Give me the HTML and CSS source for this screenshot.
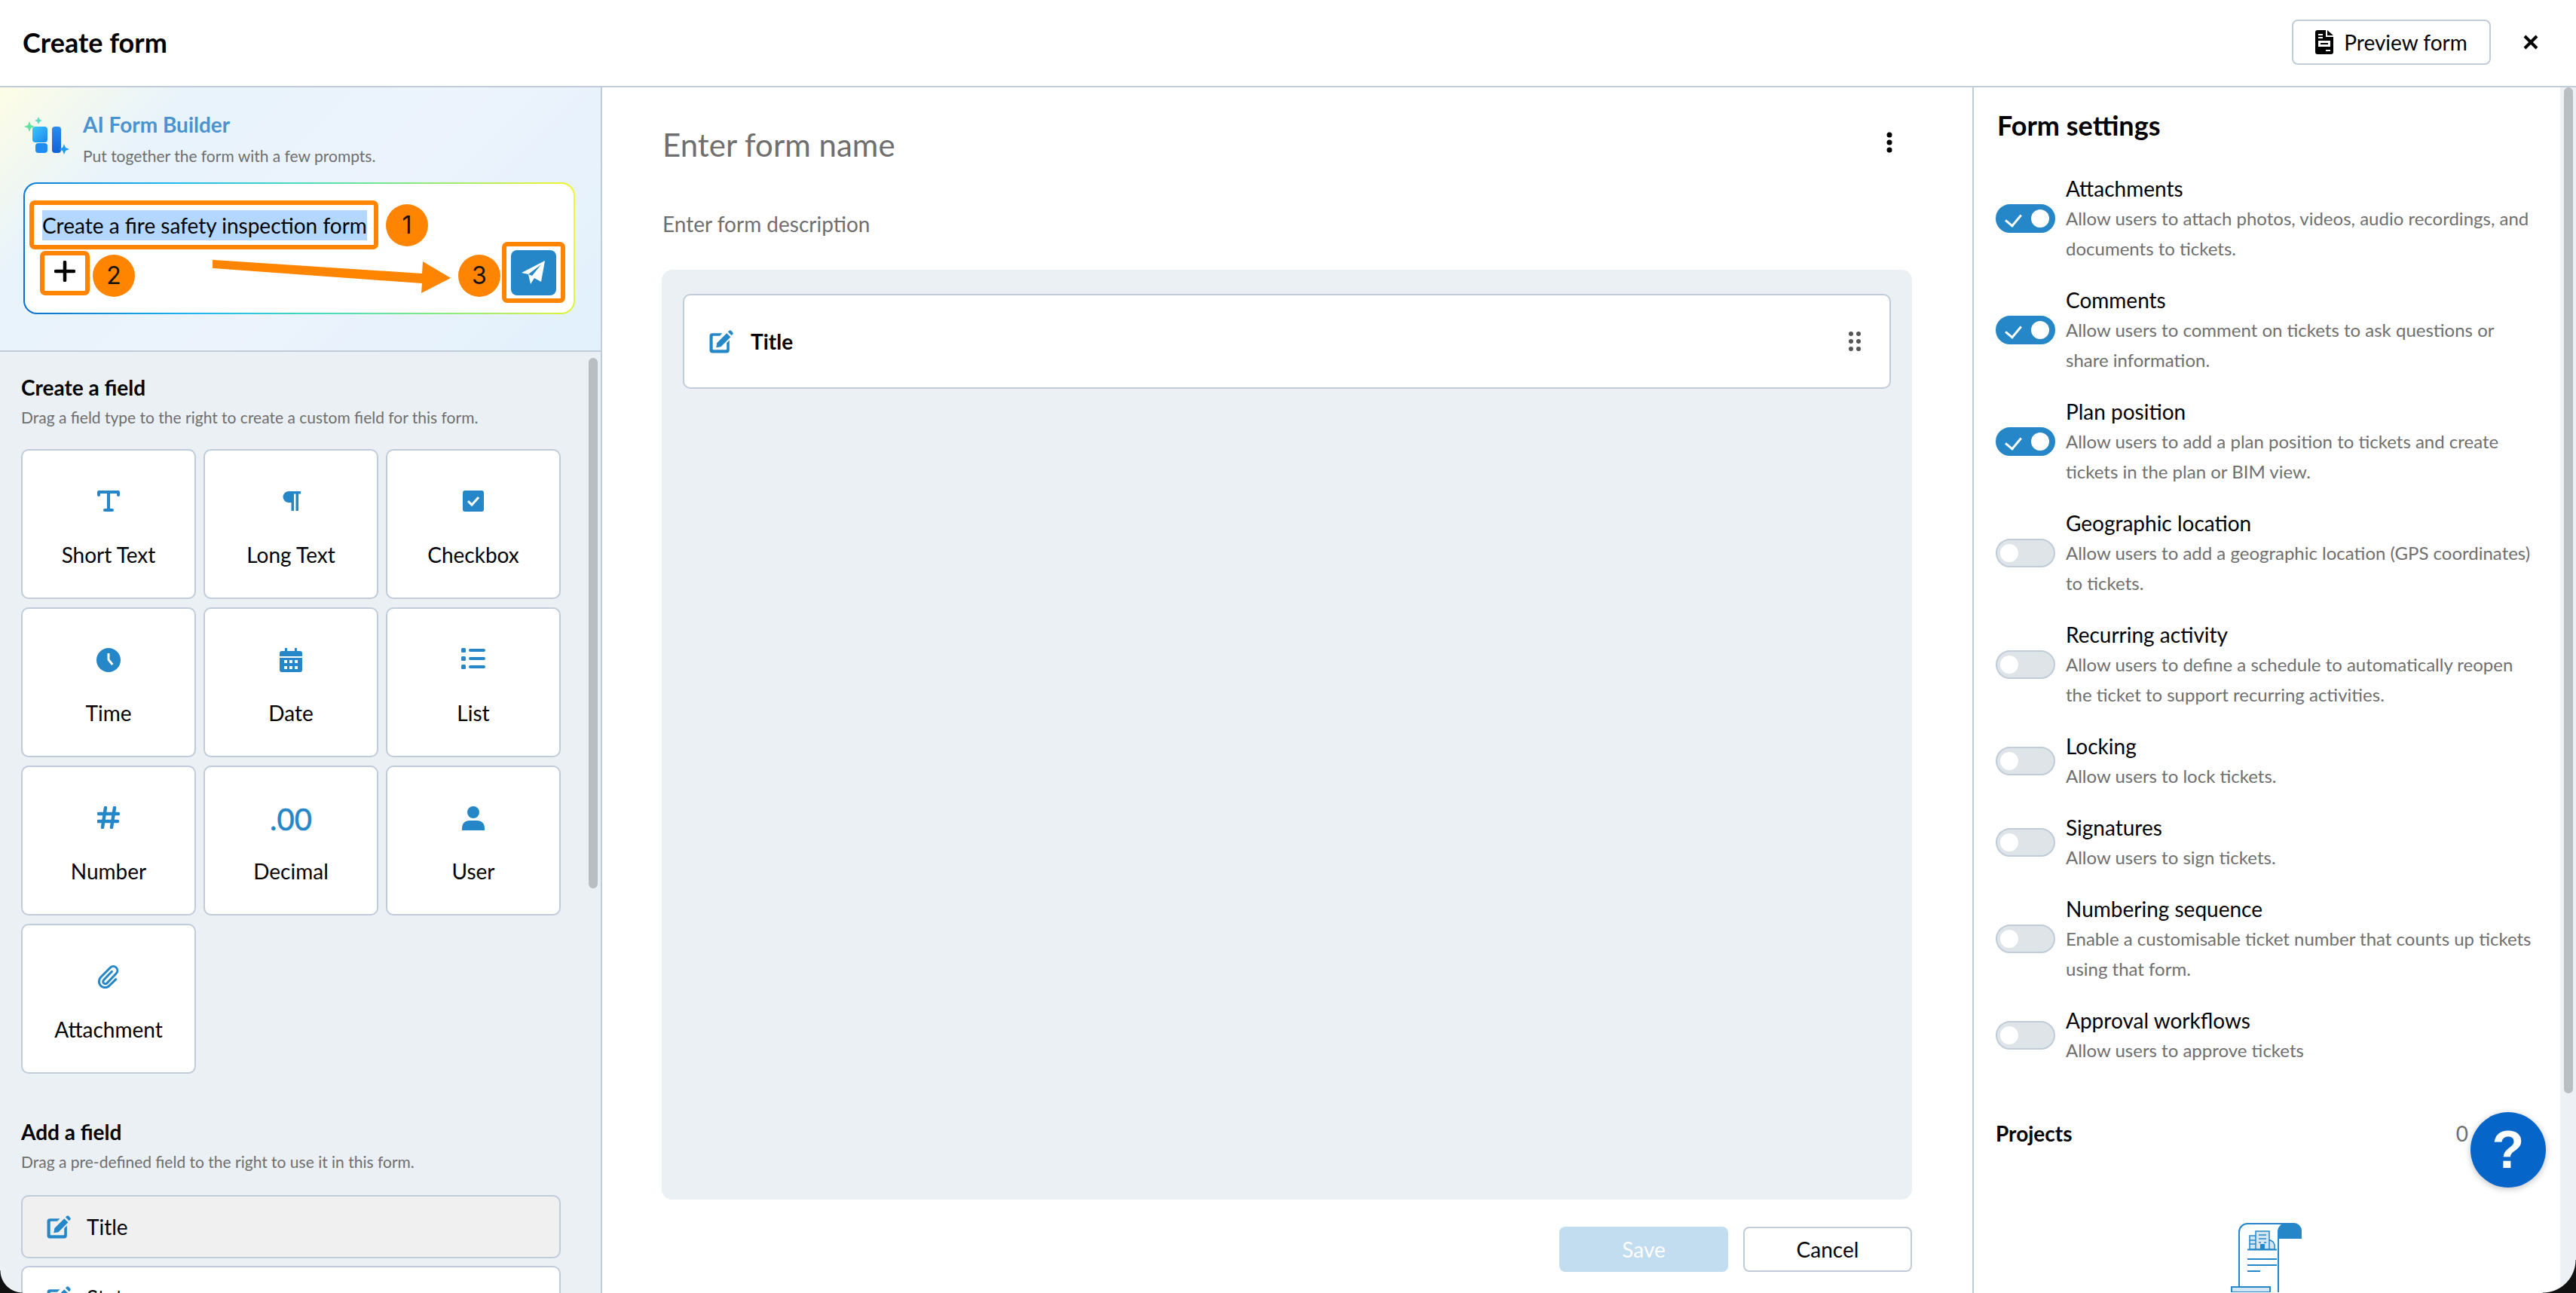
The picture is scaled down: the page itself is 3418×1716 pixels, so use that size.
FILE: index.html
```html
<!DOCTYPE html>
<html lang="en">
<head>
  <meta charset="UTF-8">
  <title>Create form</title>
  <link rel="stylesheet" href="styles.css">
</head>
<body>
  <svg class="sprites" width="0" height="0">
    <symbol id="i-edit" viewBox="0 0 32 32"><path d="M5 5h13l-3.500 3.500H6.500a1 1 0 0 0-1 1v16a1 1 0 0 0 1 1h16a1 1 0 0 0 1-1v-8l3.500-3.500V27a3.500 3.500 0 0 1-3.500 3.500H5A3.500 3.500 0 0 1 1.500 27V8.500A3.500 3.500 0 0 1 5 5z"/><path d="M11 17.500 23.500 5l5 5L16 22.500l-6 1zM25.200 3.300l1.300-1.300a2 2 0 0 1 2.800 0l1.800 1.800a2 2 0 0 1 0 2.800l-1.300 1.300z"/></symbol>
  </svg>

  <header class="topbar">
    <h1>Create form</h1>
    <div class="topbar-actions">
      <button class="btn preview-btn" type="button">
        <svg width="24" height="32" viewBox="0 0 24 32"><path d="M3 0h11v9h10v20a3 3 0 0 1-3 3H3a3 3 0 0 1-3-3V3a3 3 0 0 1 3-3zM16 0l8 7h-8z"/><path d="M4 14h16v8H4z" fill="#fff"/><path d="M7 17h10v2H7z"/><path d="M4 5h6v2H4zM4 9h6v2H4zM14 26h6v2h-6z" fill="#fff"/></svg>
        Preview form
      </button>
      <svg class="close-icon" width="20" height="20" viewBox="0 0 20 20"><path d="M2 2l16 16M18 2 2 18" stroke="#000" stroke-width="4" fill="none"/></svg>
    </div>
  </header>

  <main class="layout">
    <aside class="left-panel">
      <section class="ai-box">
        <div class="ai-head">
          <svg class="ai-logo" width="60" height="50" viewBox="0 0 60 50">
            <defs>
              <linearGradient id="aiA" x1="0" y1="0" x2="1" y2="1"><stop offset="0" stop-color="#3cc8fb"/><stop offset="1" stop-color="#1a86ee"/></linearGradient>
              <linearGradient id="aiB" x1="0" y1="0" x2="0" y2="1"><stop offset="0" stop-color="#2a8cf0"/><stop offset="1" stop-color="#0f62d6"/></linearGradient>
            </defs>
            <path d="M7 6l2 5 5 2-5 2-2 5-2-5-5-2 5-2z" fill="#5ee6a0"/>
            <path d="M19 0l1.500 3.500L24 5l-3.500 1.500L19 10l-1.500-3.500L14 5l3.500-1.500z" fill="#5fdcc0"/>
            <rect x="11" y="13" width="20" height="21" rx="4" fill="url(#aiA)"/>
            <rect x="15" y="37" width="16" height="13" rx="4" fill="#1f8cf3" transform="translate(0 -2)"/>
            <rect x="37" y="13" width="12" height="35" rx="4" fill="url(#aiB)"/>
            <path d="M53 36l2 5 5 2-5 2-2 5-2-5-5-2 5-2z" fill="#1f9bf5"/>
          </svg>
          <div class="ai-text">
            <div class="ai-title">AI Form Builder</div>
            <div class="ai-sub">Put together the form with a few prompts.</div>
          </div>
        </div>
        <div class="prompt-box">
          <div class="prompt-top">
            <div class="mark prompt-mark"><span class="selected-text">Create a fire safety inspection form</span></div>
            <span class="step step-one">1</span>
          </div>
          <div class="prompt-bottom">
            <div class="mark plus-mark">
              <svg width="28" height="28" viewBox="0 0 28 28"><path d="M14 2v24M2 14h24" stroke="#000" stroke-width="4.500" stroke-linecap="round"/></svg>
            </div>
            <span class="step">2</span>
            <span class="step step-three">3</span>
            <div class="mark send-mark">
              <div class="send-btn">
                <svg width="34" height="34" viewBox="0 0 34 34"><path d="M32 1 27 29l-9-5-5 8-3-13L1 17z" fill="#fff"/><path d="M27 6 10 19l5 2z" fill="#2587c7"/></svg>
              </div>
            </div>
          </div>
          <svg class="arrow" width="320" height="48" viewBox="0 0 320 48"><path d="M2 2 278 20 279 4 316 26 277 46 278 33 1 13a5 5 0 0 1 1-11z" fill="#ff8500"/></svg>
        </div>
      </section>

      <section class="field-scroll">
        <div class="scroll-content">
          <h2>Create a field</h2>
          <p class="hint">Drag a field type to the right to create a custom field for this form.</p>
          <div class="type-grid">
            <div class="type-card">
              <svg class="type-icon" width="30" height="30" viewBox="0 0 30 30"><path d="M2 7V3h26v4M15 3v24M10 27h10" fill="none" stroke="#2587c7" stroke-width="4" stroke-linecap="round" stroke-linejoin="round"/></svg>
              <span>Short Text</span>
            </div>
            <div class="type-card">
              <svg class="type-icon" width="30" height="30" viewBox="0 0 30 30"><path d="M12 2h16v3.500h-3V28h-3.500V5.500H19V28h-3.500V17H12A7.500 7.500 0 0 1 12 2z"/></svg>
              <span>Long Text</span>
            </div>
            <div class="type-card">
              <svg class="type-icon" width="30" height="30" viewBox="0 0 30 30"><rect x="1" y="1" width="28" height="28" rx="3"/><path d="M8 15l5 5 9-10" fill="none" stroke="#fff" stroke-width="3"/></svg>
              <span>Checkbox</span>
            </div>
            <div class="type-card">
              <svg class="type-icon" width="32" height="32" viewBox="0 0 32 32"><circle cx="16" cy="16" r="16"/><path d="M14.500 7h3v8l5 6-2.300 2-5.700-7z" fill="#fff"/></svg>
              <span>Time</span>
            </div>
            <div class="type-card">
              <svg class="type-icon" width="30" height="32" viewBox="0 0 30 32"><path d="M7 0h3v4h10V0h3v4h4a3 3 0 0 1 3 3v4H0V7a3 3 0 0 1 3-3h4zM0 13h30v16a3 3 0 0 1-3 3H3a3 3 0 0 1-3-3z"/><path d="M6 16h4v4H6zM13 16h4v4h-4zM20 16h4v4h-4zM6 24h4v4H6zM13 24h4v4h-4zM20 24h4v4h-4z" fill="#fff"/></svg>
              <span>Date</span>
            </div>
            <div class="type-card">
              <svg class="type-icon" width="32" height="28" viewBox="0 0 32 28"><rect x="0" y="0" width="6" height="6" rx="1.500"/><rect x="0" y="11" width="6" height="6" rx="1.500"/><rect x="0" y="22" width="6" height="6" rx="1.500"/><rect x="10" y="1" width="22" height="4" rx="2"/><rect x="10" y="12" width="22" height="4" rx="2"/><rect x="10" y="23" width="22" height="4" rx="2"/></svg>
              <span>List</span>
            </div>
            <div class="type-card">
              <svg class="type-icon" width="30" height="30" viewBox="0 0 30 30"><path d="M11 2 7 28M23 2l-4 26M2 10h26M1 20h26" fill="none" stroke="#2587c7" stroke-width="4.500" stroke-linecap="round"/></svg>
              <span>Number</span>
            </div>
            <div class="type-card">
              <div class="decimal-icon">.00</div>
              <span>Decimal</span>
            </div>
            <div class="type-card">
              <svg class="type-icon" width="30" height="32" viewBox="0 0 30 32"><circle cx="15" cy="8" r="8"/><path d="M0 32v-3c0-6 4-10 10-10h10c6 0 10 4 10 10v3z"/></svg>
              <span>User</span>
            </div>
            <div class="type-card">
              <svg class="type-icon" width="30" height="32" viewBox="0 0 30 32"><path d="M19 9 9 21a3 3 0 0 0 4.500 4L25 11a5.500 5.500 0 0 0-8-7.500L4.500 18A8 8 0 0 0 16 29l9-10" fill="none" stroke="#2587c7" stroke-width="3" stroke-linecap="round" transform="rotate(4 15 16)"/></svg>
              <span>Attachment</span>
            </div>
          </div>

          <h2 class="add-heading">Add a field</h2>
          <p class="hint">Drag a pre-defined field to the right to use it in this form.</p>
          <div class="field-row used">
            <svg class="row-icon" width="33" height="33"><use href="#i-edit"/></svg>
            <span>Title</span>
          </div>
          <div class="field-row">
            <svg class="row-icon" width="33" height="33"><use href="#i-edit"/></svg>
            <span>Status</span>
          </div>
        </div>
        <div class="scrollbar left-thumb"></div>
      </section>
    </aside>

    <section class="center-panel">
      <div class="name-row">
        <div class="form-name">Enter form name</div>
        <svg class="more-icon" width="8" height="28" viewBox="0 0 8 28"><circle cx="4" cy="4" r="3.500"/><circle cx="4" cy="14" r="3.500"/><circle cx="4" cy="24" r="3.500"/></svg>
      </div>
      <div class="form-desc">Enter form description</div>
      <div class="drop-area">
        <div class="title-card">
          <svg class="row-icon" width="33" height="33"><use href="#i-edit"/></svg>
          <span>Title</span>
          <svg class="drag-icon" width="16" height="26" viewBox="0 0 16 26"><circle cx="3" cy="3" r="3"/><circle cx="13" cy="3" r="3"/><circle cx="3" cy="13" r="3"/><circle cx="13" cy="13" r="3"/><circle cx="3" cy="23" r="3"/><circle cx="13" cy="23" r="3"/></svg>
        </div>
      </div>
      <div class="form-actions">
        <button class="btn save-btn" type="button">Save</button>
        <button class="btn cancel-btn" type="button">Cancel</button>
      </div>
    </section>

    <aside class="right-panel">
      <div class="settings">
        <h2 class="settings-title">Form settings</h2>

        <div class="setting">
          <span class="toggle on"></span>
          <div><div class="setting-name">Attachments</div><div class="setting-desc">Allow users to attach photos, videos, audio recordings, and documents to tickets.</div></div>
        </div>
        <div class="setting">
          <span class="toggle on"></span>
          <div><div class="setting-name">Comments</div><div class="setting-desc">Allow users to comment on tickets to ask questions or share information.</div></div>
        </div>
        <div class="setting">
          <span class="toggle on"></span>
          <div><div class="setting-name">Plan position</div><div class="setting-desc">Allow users to add a plan position to tickets and create tickets in the plan or BIM view.</div></div>
        </div>
        <div class="setting">
          <span class="toggle"></span>
          <div><div class="setting-name">Geographic location</div><div class="setting-desc">Allow users to add a geographic location (GPS coordinates) to tickets.</div></div>
        </div>
        <div class="setting">
          <span class="toggle"></span>
          <div><div class="setting-name">Recurring activity</div><div class="setting-desc">Allow users to define a schedule to automatically reopen the ticket to support recurring activities.</div></div>
        </div>
        <div class="setting">
          <span class="toggle"></span>
          <div><div class="setting-name">Locking</div><div class="setting-desc">Allow users to lock tickets.</div></div>
        </div>
        <div class="setting">
          <span class="toggle"></span>
          <div><div class="setting-name">Signatures</div><div class="setting-desc">Allow users to sign tickets.</div></div>
        </div>
        <div class="setting">
          <span class="toggle"></span>
          <div><div class="setting-name">Numbering sequence</div><div class="setting-desc">Enable a customisable ticket number that counts up tickets using that form.</div></div>
        </div>
        <div class="setting">
          <span class="toggle"></span>
          <div><div class="setting-name">Approval workflows</div><div class="setting-desc">Allow users to approve tickets</div></div>
        </div>

        <div class="projects-row">
          <span class="projects-label">Projects</span>
          <span class="projects-count">0</span>
        </div>
        <svg class="projects-art" width="95" height="92" viewBox="0 0 95 92">
          <path d="M11 92V12A11 11 0 0 1 22 1h52a11 11 0 0 0-11 11v80" fill="#fff" stroke="#2587c7" stroke-width="2"/>
          <path d="M63 21V11A10.500 10.500 0 0 1 73.500 0h10A10.500 10.500 0 0 1 94 11v10z" fill="#2587c7"/>
          <path d="M1 85h51v7H1z" fill="#d4e6f3" stroke="#2587c7" stroke-width="2"/>
          <path d="M25 35V17h8v18zM33 35V11h18v24zM51 35V22l5 3 2 4v6z" fill="#d4e6f3" stroke="#2587c7" stroke-width="1.500"/>
          <path d="M37 16h10M37 21h10M37 26h3M44 26h3M25 23h8M25 28h8" stroke="#2587c7" stroke-width="1.500"/>
          <path d="M39 35v-7h6v7z" fill="#2587c7"/>
          <path d="M22 35.500h39M22 48h39M22 56h39M22 64h17" stroke="#2587c7" stroke-width="2"/>
        </svg>
      </div>
      <div class="settings-track"><div class="scrollbar right-thumb"></div></div>
    </aside>
  </main>

  <button class="help-btn" type="button">?</button>
  <div class="corner corner-left"></div>
  <div class="corner corner-right"></div>
</body>
</html>
```

FILE: styles.css
```css
* {
  box-sizing: border-box;
}
html, body {
  margin: 0;
  height: 100%;
  overflow: hidden;
}
body {
  font-family: "Lato", sans-serif;
  color: #000;
  background: #fff;
  position: relative;
}
h1, h2, p {
  margin: 0;
}
.sprites {
  position: absolute;
}
.btn {
  font-family: inherit;
  font-size: 28px;
  border-radius: 8px;
  height: 60px;
  cursor: pointer;
}

/* top bar */
.topbar {
  height: 116px;
  border-bottom: 2px solid #c0ccd9;
  display: flex;
  align-items: center;
  justify-content: space-between;
  padding: 0 50px 2px 30px;
}
.topbar h1 {
  font-size: 36px;
  font-weight: 700;
}
.topbar-actions {
  display: flex;
  align-items: center;
  gap: 43px;
}
.preview-btn {
  width: 264px;
  background: #fff;
  border: 2px solid #c0ccd9;
  display: flex;
  align-items: center;
  justify-content: center;
  gap: 14px;
}

.layout {
  display: flex;
  height: 1600px;
}

/* left column */
.left-panel {
  width: 799px;
  flex: none;
  border-right: 2px solid #c0ccd9;
  display: flex;
  flex-direction: column;
}
.ai-box {
  height: 351px;
  flex: none;
  padding: 39px 34px 0 31px;
  border-bottom: 2px solid #c0ccd9;
  background: linear-gradient(135deg, #fdfde6 0%, #e8f3fb 22%, #ecf3fc 55%, #e2f1fc 100%);
}
.ai-head {
  display: flex;
  gap: 18px;
  height: 87px;
}
.ai-logo {
  margin-left: 1px;
  flex: none;
}
.ai-text {
  margin-top: -7px;
}
.ai-title {
  font-size: 28px;
  font-weight: 700;
  color: #4a93cf;
  line-height: 34px;
}
.ai-sub {
  font-size: 21px;
  color: #6f6f6f;
  line-height: 30px;
  margin-top: 10px;
}
.prompt-box {
  position: relative;
  height: 175px;
  border: 2px solid transparent;
  border-radius: 18px;
  padding: 22px 10px 0 6px;
  background:
    linear-gradient(#fff, #fff) padding-box,
    linear-gradient(78deg, #0a6fd0 0%, #1cb8f0 30%, #48dcc0 52%, #86ea80 72%, #f5f52e 100%) border-box;
}
.prompt-top {
  display: flex;
  align-items: center;
  gap: 10px;
}
.mark {
  border: 6px solid #ff8500;
  border-radius: 7px;
  background: #fff;
}
.prompt-mark {
  width: 463px;
  height: 65px;
  padding-left: 11px;
  display: flex;
  align-items: center;
}
.selected-text {
  font-size: 28px;
  line-height: 40px;
  background: #b3d7ff;
  white-space: nowrap;
}
.step {
  width: 56px;
  height: 56px;
  flex: none;
  border-radius: 50%;
  background: #ff8500;
  font-family: "Inter", sans-serif;
  font-size: 32px;
  line-height: 56px;
  text-align: center;
  color: #111;
}
.prompt-bottom {
  display: flex;
  align-items: flex-start;
  position: absolute;
  left: 20px;
  top: 89px;
  width: 697px;
}
.plus-mark {
  width: 66px;
  height: 59px;
  display: flex;
  align-items: center;
  justify-content: center;
  margin-right: 4px;
}
.plus-mark svg {
  margin-top: -5px;
}
.prompt-bottom .step {
  margin-top: 5px;
}
.step-three {
  margin-left: auto;
  margin-right: 2px;
}
.send-mark {
  width: 84px;
  height: 81px;
  margin-top: -12px;
  padding: 5px 6px;
}
.send-btn {
  width: 60px;
  height: 60px;
  border-radius: 8px;
  background: #2587c7;
  display: flex;
  align-items: center;
  justify-content: center;
}
.arrow {
  position: absolute;
  left: 249px;
  top: 99px;
}

.field-scroll {
  flex: 1;
  min-height: 0;
  background: #ebf0f4;
  position: relative;
  overflow: hidden;
}
.scroll-content {
  padding: 30px 0 0 28px;
  width: 716px;
  box-sizing: content-box;
}
.scroll-content h2 {
  font-size: 28px;
  font-weight: 700;
  line-height: 34px;
}
.hint {
  font-size: 21px;
  line-height: 30px;
  color: #6f6f6f;
  margin-top: 8px;
}
.type-grid {
  display: grid;
  grid-template-columns: repeat(3, 232px);
  grid-auto-rows: 199px;
  column-gap: 10px;
  row-gap: 11px;
  margin-top: 27px;
}
.type-card {
  background: #fff;
  border: 2px solid #c0ccd9;
  border-radius: 10px;
  display: flex;
  flex-direction: column;
  align-items: center;
  font-size: 28px;
  padding-top: 52px;
  position: relative;
}
.type-card span {
  position: absolute;
  top: 120px;
  line-height: 36px;
}
.type-icon, .row-icon {
  fill: #2587c7;
  flex: none;
}
.decimal-icon {
  font-size: 40px;
  line-height: 34px;
  color: #2587c7;
  -webkit-text-stroke: 0.6px #2587c7;
}
.add-heading {
  margin-top: 60px;
}
.field-row {
  height: 84px;
  margin-top: 10px;
  background: #fff;
  border: 2px solid #c0ccd9;
  border-radius: 10px;
  display: flex;
  align-items: center;
  gap: 21px;
  padding-left: 31px;
  font-size: 28px;
}
.field-row.used {
  background: #f0f0f0;
  margin-top: 29px;
}
.scrollbar {
  width: 12px;
  background: #b9bec3;
  border-radius: 6px;
}
.left-thumb {
  position: absolute;
  left: 781px;
  top: 8px;
  height: 704px;
}

/* middle column */
.center-panel {
  width: 1820px;
  flex: none;
  border-right: 2px solid #c0ccd9;
  padding: 0 80px 0 79px;
}
.name-row {
  display: flex;
  justify-content: space-between;
  align-items: center;
  height: 72px;
  margin-top: 40px;
  padding: 0 26px 0 1px;
}
.form-name {
  font-size: 42px;
  color: #6f6f6f;
}
.more-icon {
  margin-top: -6px;
}
.form-desc {
  font-size: 28px;
  line-height: 36px;
  color: #6f6f6f;
  margin: 51px 0 0 1px;
}
.drop-area {
  height: 1234px;
  margin-top: 43px;
  background: #ebf0f4;
  border-radius: 14px;
  padding: 32px 28px;
}
.title-card {
  height: 126px;
  background: #fff;
  border: 2px solid #c0ccd9;
  border-radius: 10px;
  display: flex;
  align-items: center;
  gap: 23px;
  padding: 0 38px 0 32px;
  font-size: 28px;
  font-weight: 700;
}
.drag-icon {
  margin-left: auto;
  fill: #555;
}
.form-actions {
  display: flex;
  justify-content: flex-end;
  gap: 20px;
  margin-top: 36px;
}
.save-btn, .cancel-btn {
  width: 224px;
}
.save-btn {
  background: #c2dcf0;
  border: 0;
  color: #fff;
}
.cancel-btn {
  background: #fff;
  border: 2px solid #c0ccd9;
}

/* right column */
.right-panel {
  flex: 1;
  position: relative;
  display: flex;
  min-width: 0;
}
.settings {
  flex: 1;
  padding: 28px 0 0 29px;
  min-width: 0;
}
.settings-title {
  font-size: 36px;
  font-weight: 700;
  line-height: 44px;
  margin-bottom: 42px;
  margin-left: 2px;
}
.setting {
  display: flex;
  align-items: center;
  gap: 14px;
  margin-bottom: 28px;
}
.setting-name {
  font-size: 28px;
  line-height: 40px;
  white-space: nowrap;
}
.setting-desc {
  font-size: 24px;
  line-height: 40px;
  color: #6f6f6f;
  max-width: 625px;
}
.toggle {
  width: 79px;
  height: 38px;
  flex: none;
  border-radius: 19px;
  background: #dfe4e9;
  border: 2px solid #c0ccd9;
  position: relative;
}
.toggle::before {
  content: "";
  position: absolute;
  left: 4px;
  top: 5px;
  width: 24px;
  height: 24px;
  border-radius: 50%;
  background: #fff;
}
.toggle.on {
  background: #2587c7;
  border-color: #2587c7;
}
.toggle.on::before {
  left: 45px;
}
.toggle.on::after {
  content: "";
  position: absolute;
  left: 15px;
  top: 7px;
  width: 10px;
  height: 17px;
  border: solid #fff;
  border-width: 0 3px 3px 0;
  transform: rotate(40deg);
}
.projects-row {
  display: flex;
  justify-content: space-between;
  margin-top: 70px;
  height: 40px;
  line-height: 40px;
  font-size: 28px;
  padding-right: 122px;
}
.projects-label {
  font-weight: 700;
}
.projects-count {
  color: #6f6f6f;
}
.projects-art {
  display: block;
  margin: 99px 0 0 312px;
}
.settings-track {
  width: 21px;
  flex: none;
  background: #edf1f5;
  padding-left: 5px;
}
.right-thumb {
  height: 1335px;
}
.help-btn {
  position: absolute;
  left: 3278px;
  top: 1476px;
  width: 100px;
  height: 100px;
  border-radius: 50%;
  border: 0;
  background: #0565c9;
  color: #fff;
  font-family: "Liberation Sans", sans-serif;
  font-size: 70px;
  font-weight: 700;
  box-shadow: 0 2px 8px rgba(0, 0, 0, 0.25);
}

/* screen corners of the capture */
.corner {
  position: absolute;
  bottom: 0;
}
.corner-left {
  left: 0;
  width: 30px;
  height: 30px;
  background: radial-gradient(circle at 100% 0, transparent 29px, #111 30px);
}
.corner-right {
  right: 0;
  width: 44px;
  height: 44px;
  background: radial-gradient(circle at 0 0, transparent 43px, #111 44px);
}
```
